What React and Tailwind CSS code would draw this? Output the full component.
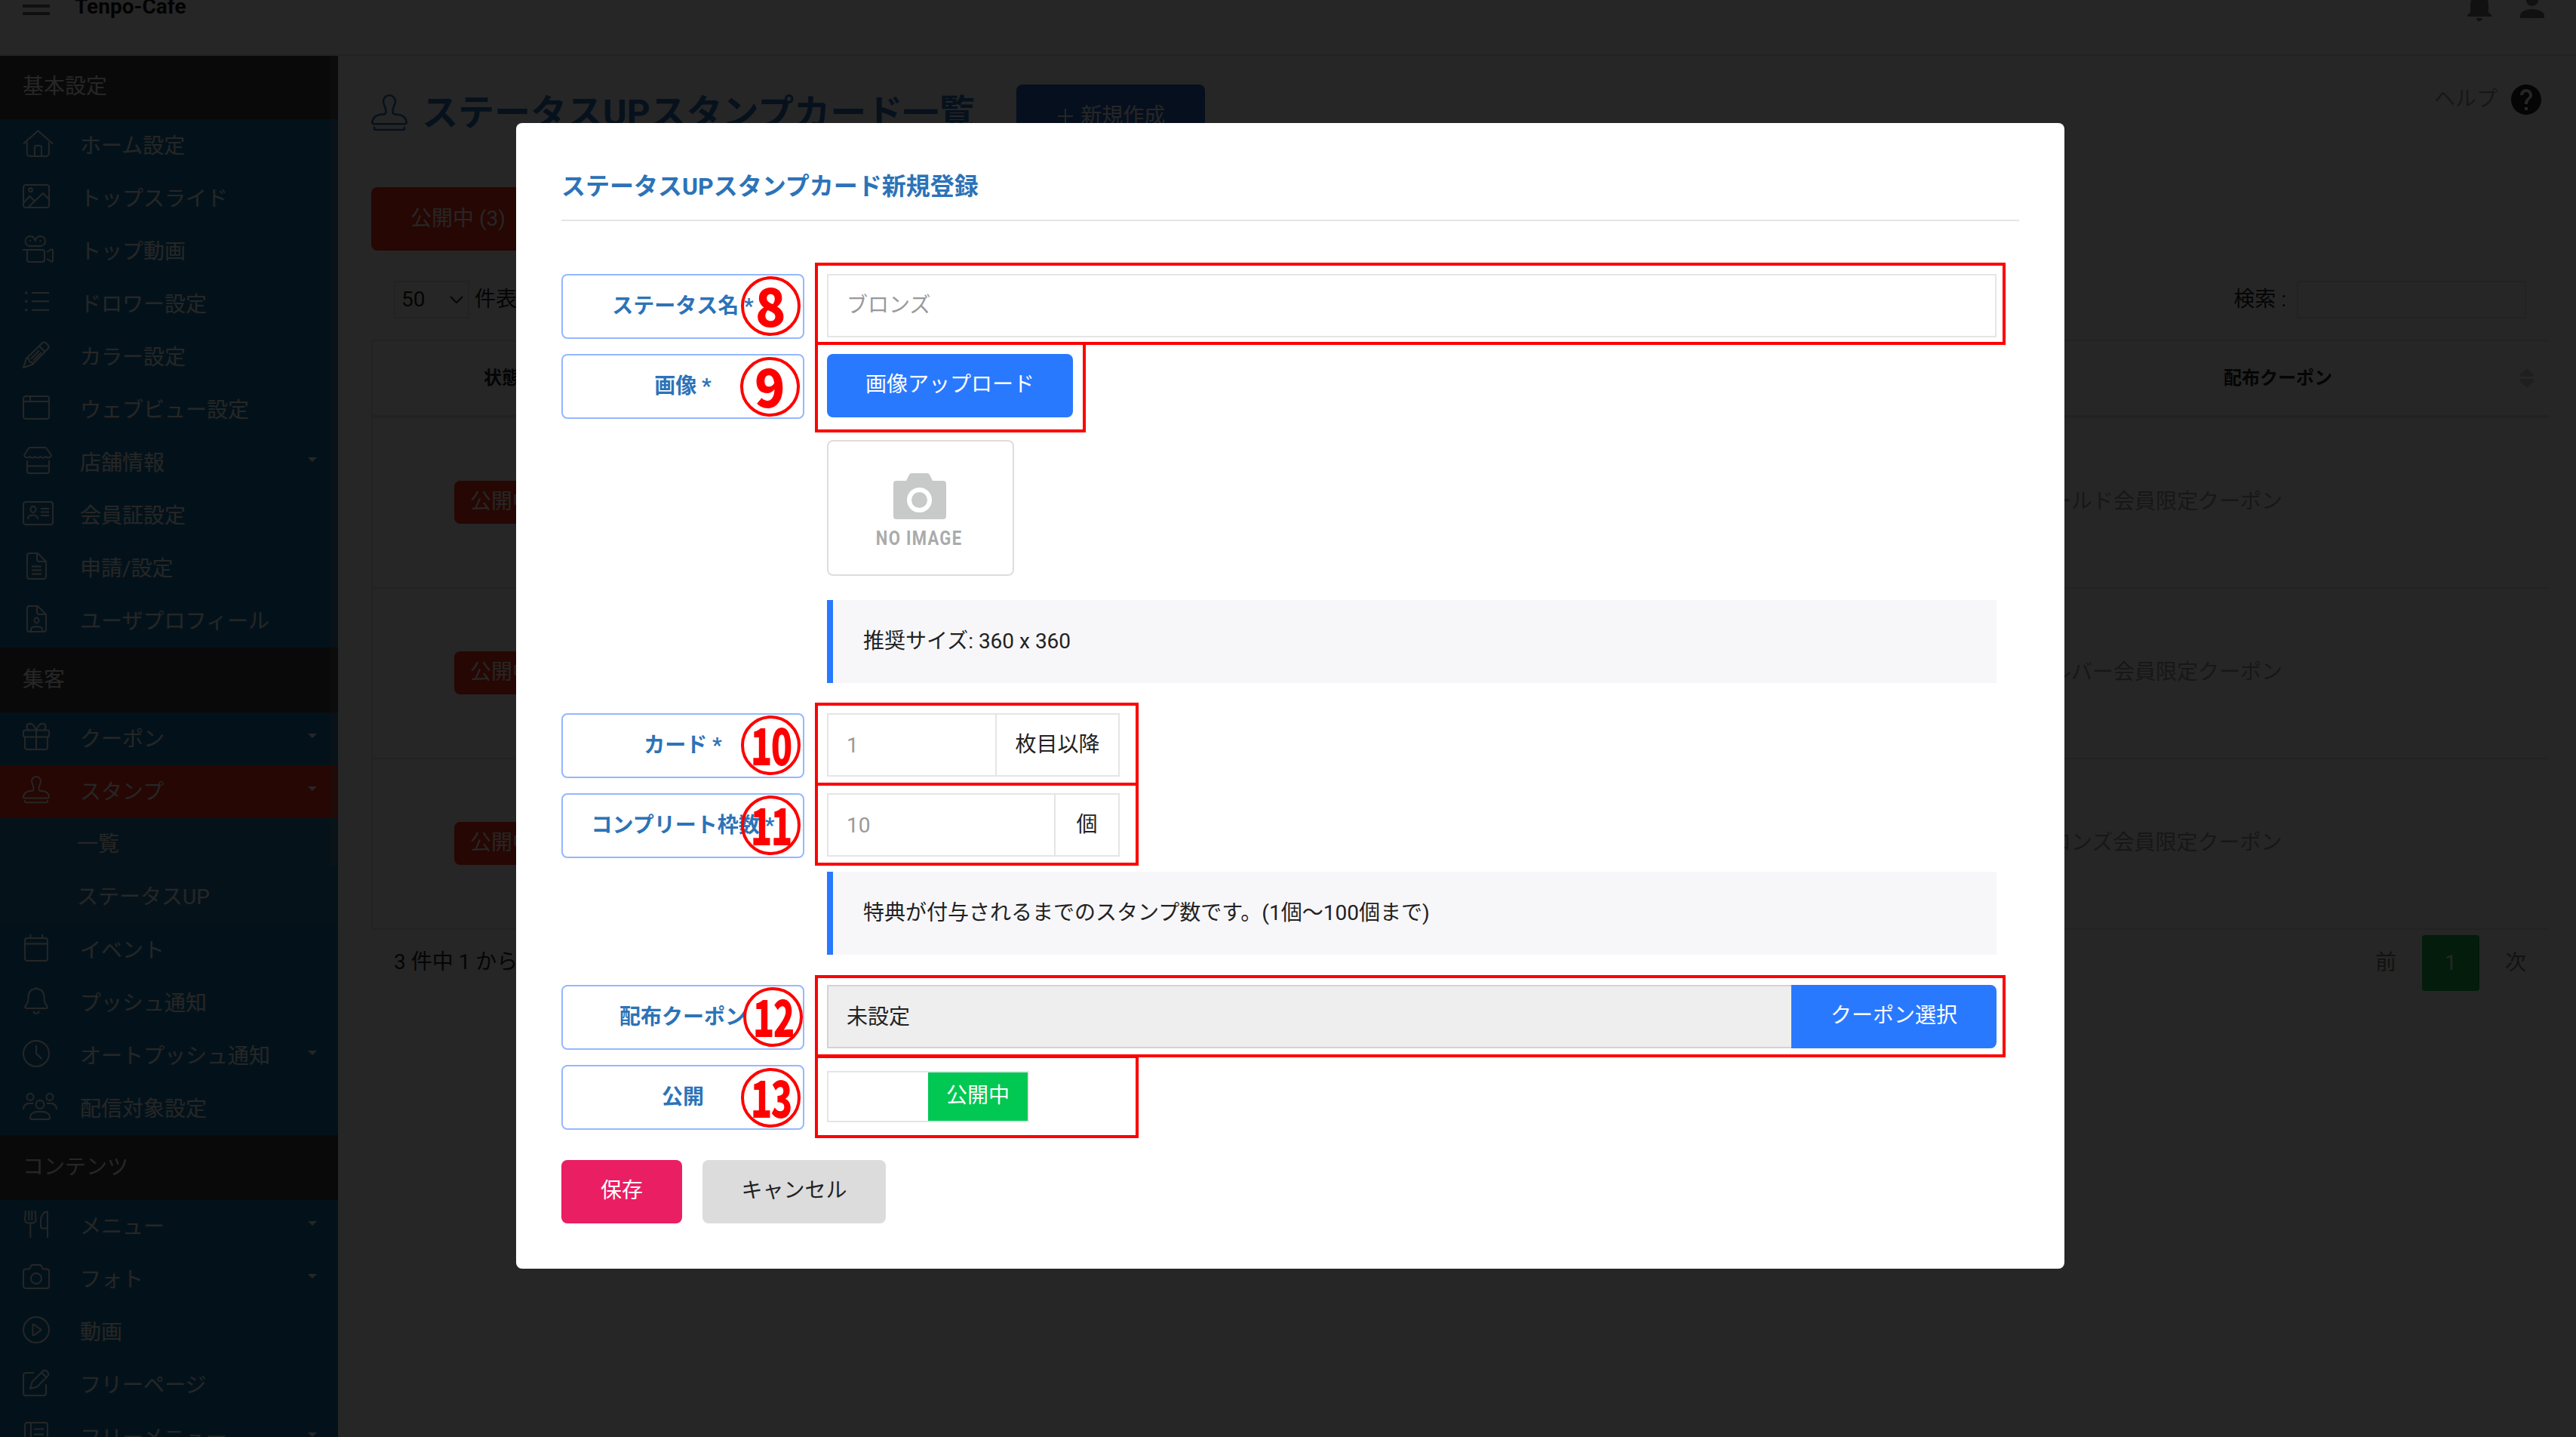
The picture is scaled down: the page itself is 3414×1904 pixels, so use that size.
import React from "react";
import clsx from "clsx";
import { MdHelp, MdNotifications, MdPerson } from "react-icons/md";

const icons = {
  home: (
    <>
      <path d="M1 18.5 20.3 1.2 40 18.5" />
      <path d="M5.8 16v15a4 4 0 0 0 4 4h21a4 4 0 0 0 4-4V16" />
      <path d="M16 35V23a2 2 0 0 1 2-2h5a2 2 0 0 1 2 2v12" />
    </>
  ),
  image: (
    <>
      <rect x="1" y="3" width="34" height="30" rx="3" />
      <circle cx="10.5" cy="9.7" r="2.4" />
      <path d="m1.5 26.5 8-8.5 6 6M8 32l19-18 8 8" />
    </>
  ),
  movie: (
    <>
      <path d="M10 14h13.5a6.5 6.5 0 1 0-6.2-8.5L16.8 7l-.6-1.5A6.5 6.5 0 1 0 10 14z" />
      <path d="M10 6v2M23.5 6v2" />
      <path d="M0 19h26a3 3 0 0 1 3 3v10a3 3 0 0 1-3 3H9a3 3 0 0 1-3-3V19" />
      <path d="m32 22 6-3.5c1-.5 2 0 2 1v14c0 1-1 1.5-2 1L32 31" />
    </>
  ),
  list: (
    <>
      <path d="M12 6h23M12 17.3h23M12 28.7h23" />
      <path strokeWidth="3.5" strokeLinecap="round" d="M4.8 6v.1M4.8 17.3v.1M4.8 28.7v.1" />
    </>
  ),
  pencil: (
    <>
      <path d="m1 35 4-12L26 2.5c1.5-1.5 3.5-1.5 5 0l2.5 2.5c1.5 1.5 1.5 3.5 0 5L13 31z" />
      <path d="m22 6.5 7.5 7.500M5 23l3.500.5.5 4 3.500.5.5 3M11 23.500l11-11M14 26l11-11" />
    </>
  ),
  window: (
    <>
      <rect x="1" y="3" width="34" height="30" rx="3" />
      <path d="M1 10h34M10 3v7" />
    </>
  ),
  store: (
    <>
      <path d="M9.5 1h20a3 3 0 0 1 2.5 1.5l5.5 8c1.5 3-4 5.5-7 2.500-2 2-5 2-7 0-2 2-5 2-7 0-2 2-5 2-7 0-3 2.500-8.500.5-7-2.500l5-8A3 3 0 0 1 9.500 1z" />
      <path d="M6 18v14a3 3 0 0 0 3 3h23a3 3 0 0 0 3-3V18M6 25.5h29" />
    </>
  ),
  idcard: (
    <>
      <rect x="1" y="3" width="39" height="30" rx="3" />
      <ellipse cx="14" cy="13" rx="3.5" ry="4" />
      <path d="M7 26v-1c0-6 13-6 13 0v1M24 12h11M24 16.5h11M24 21h11" />
    </>
  ),
  file: (
    <>
      <path d="M20 1H9a3 3 0 0 0-3 3v28a3 3 0 0 0 3 3h19a3 3 0 0 0 3-3V12z" />
      <path d="M19 1v8a3 3 0 0 0 3 3h9M12 18.5h13M12 23.5h13M12 28.5h13" />
    </>
  ),
  fileUser: (
    <>
      <path d="M20 1H9a3 3 0 0 0-3 3v28a3 3 0 0 0 3 3h19a3 3 0 0 0 3-3V12z" />
      <path d="M19 1v8a3 3 0 0 0 3 3h9" />
      <ellipse cx="18.5" cy="20" rx="3" ry="3.5" />
      <path d="M11 35v-3c0-5 15-5 15 0v3" />
    </>
  ),
  gift: (
    <>
      <rect x="1" y="9.5" width="34" height="9" rx="2" />
      <path d="M3 18.5V32a3 3 0 0 0 3 3h24a3 3 0 0 0 3-3V18.5M18 9.5V35" />
      <path d="M18 9.5C15 2 11 0 8 1 4.5 2 5 8 8 9.5M18 9.5C21 2 25 0 28 1c3.5 1 3 7 0 8.5" />
    </>
  ),
  stamp: (
    <>
      <path d="M14.5 18c.8-5-2.500-7-2.500-11a6 6 0 0 1 12 0c0 4-3.300 6-2.500 11 0 2 2 2 4 2 6 0 9.500 4 9.500 8 0 1-.5 1.500-1.500 1.500h-31C1.500 29.500 1 29 1 28c0-4 3.500-8 9.500-8 2 0 4 0 4-2z" />
      <path d="M3 32v2c0 .7.5 1.2 1.2 1.2h27.600c.7 0 1.200-.5 1.200-1.200v-2" />
    </>
  ),
  calendar: (
    <>
      <rect x="3" y="5" width="30" height="30" rx="3" />
      <path d="M3 12.5h30M10.5 0v5M26 0v5" />
    </>
  ),
  bell: (
    <>
      <path d="M18 0v2M18 2c-7 0-10.5 5-10.500 11 0 6-1 9-3.500 11.500-1.500 1.500-1 3.500 1 3.500h26c2 0 2.500-2 1-3.500-2.500-2.500-3.500-5.500-3.500-11.500C28.500 7 25 2 18 2z" />
      <path d="M14.5 31.5c0 4.5 7 4.5 7 0" />
    </>
  ),
  clock: (
    <>
      <circle cx="18" cy="18" r="17" />
      <path d="M18 7v11l7.5 7" />
    </>
  ),
  users: (
    <>
      <circle cx="10" cy="5.5" r="4.5" />
      <circle cx="36" cy="5.5" r="4.5" />
      <circle cx="23" cy="15.5" r="5.5" />
      <path d="M1 22c0-5.5 3-8 8-8h5M45 22c0-5.5-3-8-8-8h-5" />
      <path d="M10 33c0-5 4-8 10-8h6c6 0 10 3 10 8 0 1.5-.5 2-2 2H12c-1.5 0-2-.5-2-2z" />
    </>
  ),
  fork: (
    <>
      <path d="M4 0 3 12c0 3 2 4.5 4.5 4.5H13c2.5 0 4.500-1.500 4.500-4.500l-1-12M8.300 0v13M12.300 0v13M10.300 16.500V36" />
      <path d="M33 36V1.5c-6 0-9 6-9 12V21c0 1.5.5 2.5 2 2.5h7" />
    </>
  ),
  camera: (
    <>
      <path d="M4 7.5h4c3 0 2-5.5 5-5.5h10c3 0 2 5.5 5 5.5h4a3 3 0 0 1 3 3V30a3 3 0 0 1-3 3H4a3 3 0 0 1-3-3V10.5a3 3 0 0 1 3-3z" />
      <circle cx="18" cy="20" r="7" />
    </>
  ),
  play: (
    <>
      <circle cx="18" cy="18" r="17" />
      <path d="M13.5 11.500v13c0 .8.8 1 1.300.6l9-6.300c.7-.5.7-1.100 0-1.600l-9-6.300c-.5-.4-1.300-.2-1.300.6z" />
    </>
  ),
  edit: (
    <>
      <path d="M15 5H4a3 3 0 0 0-3 3v24a3 3 0 0 0 3 3h24a3 3 0 0 0 3-3V20" />
      <path d="m10 26 2.500-9L27 2.500c1-1 3-1 4.500 0l2 2c1 1.500 1 3 0 4.500L19 23.500zM25 4.500l6.500 6.500" />
    </>
  ),
  book: (
    <>
      <rect x="3" y="1" width="30" height="36" rx="3" />
      <path d="M11 1v36M15 9.5h13M15 16.5h13" />
    </>
  ),
};

const LineIcon = ({ name, className = "w-12 h-9" }) => (
  <svg
    viewBox="0 0 48 36"
    className={clsx("shrink-0 overflow-visible", className)}
    fill="none"
    stroke="currentColor"
    strokeWidth="1.9"
    strokeLinejoin="round"
  >
    {icons[name]}
  </svg>
);

const menu = [
  {
    title: "基本設定",
    items: [
      { label: "ホーム設定", icon: "home" },
      { label: "トップスライド", icon: "image" },
      { label: "トップ動画", icon: "movie" },
      { label: "ドロワー設定", icon: "list" },
      { label: "カラー設定", icon: "pencil" },
      { label: "ウェブビュー設定", icon: "window" },
      { label: "店舗情報", icon: "store", caret: true },
      { label: "会員証設定", icon: "idcard" },
      { label: "申請/設定", icon: "file" },
      { label: "ユーザプロフィール", icon: "fileUser" },
    ],
  },
  {
    title: "集客",
    items: [
      { label: "クーポン", icon: "gift", caret: true },
      { label: "スタンプ", icon: "stamp", caret: true, active: true, children: ["一覧", "ステータスUP"] },
      { label: "イベント", icon: "calendar" },
      { label: "プッシュ通知", icon: "bell" },
      { label: "オートプッシュ通知", icon: "clock", caret: true },
      { label: "配信対象設定", icon: "users" },
    ],
  },
  {
    title: "コンテンツ",
    items: [
      { label: "メニュー", icon: "fork", caret: true },
      { label: "フォト", icon: "camera", caret: true },
      { label: "動画", icon: "play" },
      { label: "フリーページ", icon: "edit" },
      { label: "フリーメニュー", icon: "book", caret: true },
    ],
  },
];

const rows = ["ゴールド会員限定クーポン", "シルバー会員限定クーポン", "ブロンズ会員限定クーポン"];

const Header = () => (
  <header className="flex h-[74px] shrink-0 justify-between overflow-hidden border-b-2 border-[#e5e5e5] pl-[30px] pr-[34px]">
    <div className="flex items-start">
      <div className="-mt-1 flex w-9 flex-col gap-1.5">
        <span className="h-1 bg-[#666]" />
        <span className="h-1 bg-[#666]" />
        <span className="h-1 bg-[#666]" />
      </div>
      <span className="-mt-[7px] ml-[33px] text-[28px] leading-[32px] font-bold text-[#1a1a1a]">Tenpo-Cafe</span>
    </div>
    <div className="-mt-4 flex gap-[22px] text-[#757575]">
      <MdNotifications size={48} />
      <MdPerson size={48} />
    </div>
  </header>
);

const SideItem = ({ item }) => (
  <>
    <div className={clsx("flex h-[70px] items-center pl-[30px] pr-7", item.active && "bg-[#ff2e14]")}>
      <LineIcon name={item.icon} className="w-12 h-9 mb-1.5" />
      <span className="ml-7 grow pt-0.5">{item.label}</span>
      {item.caret && <span className="mb-2 h-0 w-0 border-x-[6px] border-t-[6px] border-x-transparent border-t-white" />}
    </div>
    {item.children?.map((child) => (
      <div key={child} className="flex h-[70px] items-center bg-[#257ba8] pl-[102px]">
        {child}
      </div>
    ))}
  </>
);

const Sidebar = () => (
  <aside className="relative w-[448px] shrink-0 overflow-hidden bg-[#1677ab] text-[28px] leading-[42px] text-white">
    {menu.map((section, i) => (
      <div key={section.title}>
        <div className={clsx("flex items-center bg-[#3c3c3c] pl-[30px]", i === 0 ? "h-[84px] pb-0.5" : "h-[86px]")}>
          {section.title}
        </div>
        {section.items.map((item) => (
          <SideItem key={item.label} item={item} />
        ))}
      </div>
    ))}
    <div className="absolute top-0 right-0 h-[1073px] w-[10px] bg-[#888]/30" />
  </aside>
);

const Main = () => (
  <main className="flex grow flex-col pt-[38px] pr-9 pl-11 text-[28px] leading-[42px]">
    <div className="flex h-[84px] items-start">
      <LineIcon name="stamp" className="mt-[13px] h-12 w-16 text-[#2c73b8]" />
      <h1 className="ml-[3px] text-[48px] leading-[76px] font-bold text-[#2c73b8]">ステータスUPスタンプカード一覧</h1>
      <button className="ml-[55px] flex h-[84px] w-[250px] items-center justify-center rounded-lg bg-[#2a66c0] pl-0.5 text-white">
        <svg viewBox="0 0 20 20" className="mr-2.5 h-5 w-5" stroke="currentColor" strokeWidth="2">
          <path d="M10 0v20M0 10h20" />
        </svg>
        新規作成
      </button>
      <div className="ml-auto flex h-10 items-center pr-1.5 text-[#999]">
        ヘルプ
        <MdHelp size={48} className="ml-3.5 text-[#222]" />
      </div>
    </div>

    <button className="mt-[52px] h-[84px] w-[240px] rounded-lg bg-[#ff2e14] pl-[52px] text-left text-white">
      公開中 (3)
    </button>

    <div className="mt-10 flex h-[50px] items-center pr-[30px] pl-[30px] text-[#222]">
      <div className="flex h-[50px] w-[100px] items-center justify-between border-2 border-[#e5e5e5] pr-1.5 pl-2">
        50
        <svg viewBox="0 0 18 10" className="h-2.5 w-[18px]" fill="none" stroke="currentColor" strokeWidth="2">
          <path d="m1 1 8 8 8-8" />
        </svg>
      </div>
      <span className="ml-[7px]">件表示</span>
      <span className="ml-auto">検索 :</span>
      <div className="ml-[14px] h-[50px] w-[304px] border-2 border-[#e5e5e5]" />
    </div>

    <div className="mt-7 border-t-2 border-l-2 border-[#e5e5e5] text-[24px]">
      <div className="flex h-[102px] items-center justify-between border-b-4 border-[#e5e5e5] font-bold text-[#222]">
        <span className="w-[342px] text-center">状態</span>
        <div className="relative w-[718px] text-center">
          配布クーポン
          <svg viewBox="0 0 18 26" className="absolute top-2 right-5 h-[26px] w-[18px]" fill="#ccc">
            <path d="m9 0 9 8v3H0V8zM0 14h18v4l-9 8-9-8z" />
          </svg>
        </div>
      </div>
      {rows.map((name) => (
        <div key={name} className="flex h-[226px] items-center justify-between border-b-2 border-[#e5e5e5] text-[28px]">
          <div className="flex w-[342px] justify-center">
            <span className="mb-0.5 h-[57px] w-[126px] rounded-lg bg-[#ff2e14] text-center leading-[56px] text-white">公開中</span>
          </div>
          <span className="w-[718px] pb-0.5 pl-[29px] text-[#999]">{name}</span>
        </div>
      ))}
    </div>

    <div className="mt-[7px] flex h-[74px] items-center pr-[30px] pl-[30px] text-[#222]">
      <span className="pb-0.5">3 件中 1 から 3 まで表示</span>
      <span className="ml-auto text-[#777]">前</span>
      <span className="ml-[34px] flex h-[74px] w-[76px] items-center justify-center rounded bg-[#15b850] text-white">1</span>
      <span className="ml-[34px] text-[#777]">次</span>
    </div>
  </main>
);

const Label = ({ children }) => (
  <div className="h-[86px] w-[322px] shrink-0 rounded-lg border-2 border-[#94b8ff] text-center leading-[81px] font-bold text-[#2c73b8]">
    {children}
  </div>
);

const Note = ({ children }) => (
  <div className="h-[110px] border-l-8 border-[#2979ff] bg-[#f7f7f9] pl-10 leading-[110px]">{children}</div>
);

const UnitInput = ({ value, unit, unitClass }) => (
  <div className="flex h-[84px] w-[388px] border-2 border-[#e5e5e5] leading-[79px]">
    <span className="grow pl-6 pt-px text-[#999]">{value}</span>
    <span className={clsx("border-l-2 border-[#e5e5e5] text-center", unitClass)}>{unit}</span>
  </div>
);

// red frames and numbers, positioned from the modal's top left corner
const frames = [
  "left-[396px] top-[185px] w-[1578px] h-[109px]",
  "left-[396px] top-[290px] w-[359px] h-[120px]",
  "left-[396px] top-[768px] w-[429px] h-[110px]",
  "left-[396px] top-[874px] w-[429px] h-[110px]",
  "left-[396px] top-[1129px] w-[1578px] h-[109px]",
  "left-[396px] top-[1235px] w-[429px] h-[110px]",
];

const marks = [
  { n: 8, pos: "left-[298px] top-[203px]" },
  { n: 9, pos: "left-[297px] top-[310px]" },
  { n: 10, pos: "left-[298px] top-[785px]" },
  { n: 11, pos: "left-[298px] top-[891px]" },
  { n: 12, pos: "left-[301px] top-[1145px]" },
  { n: 13, pos: "left-[298px] top-[1252px]" },
];

const Modal = () => (
  <div className="relative h-[1518px] w-[2052px] rounded-lg bg-white px-[60px] pt-[60px] text-[28px] text-[#222]">
    <h2 className="border-b-2 border-[#e5e5e5] pb-5 text-[32px] leading-[48px] font-bold text-[#2c73b8]">
      ステータスUPスタンプカード新規登録
    </h2>

    <div className="mt-[70px] flex gap-[30px]">
      <Label>ステータス名 *</Label>
      <div className="h-[84px] w-[1550px] border-2 border-[#e5e5e5] pl-6 leading-[80px] text-[#999]">ブロンズ</div>
    </div>

    <div className="mt-5 flex gap-[30px]">
      <Label>画像 *</Label>
      <div className="w-[1550px]">
        <button className="block h-[84px] w-[326px] rounded-lg bg-[#2979ff] pb-0.5 text-white">画像アップロード</button>
        <div className="mt-[30px] flex h-[180px] w-[248px] flex-col items-center rounded-lg border-2 border-[#ddd] pt-[42px] pr-0.5">
          <svg viewBox="0 0 70 61" className="h-[61px] w-[70px]">
            <path
              fill="#c8caca"
              d="M4 10h13l4-8q1-2 3-2h21q2 0 3 2l4 8h14q4 0 4 4v43q0 4-4 4H4q-4 0-4-4V14q0-4 4-4z"
            />
            <circle cx="34.5" cy="35.5" r="13.5" fill="none" stroke="#fff" strokeWidth="6" />
          </svg>
          <span className="mt-3 pr-0.5 text-[25px] leading-[28px] font-bold text-[#a9abab]">
            <span className="inline-block scale-x-[0.88] tracking-[1.5px]">NO IMAGE</span>
          </span>
        </div>
        <div className="mt-8">
          <Note>推奨サイズ: 360 x 360</Note>
        </div>
      </div>
    </div>

    <div className="mt-10 flex gap-[30px]">
      <Label>カード *</Label>
      <UnitInput value="1" unit="枚目以降" unitClass="w-[163px]" />
    </div>

    <div className="mt-5 flex gap-[30px]">
      <Label>コンプリート枠数 *</Label>
      <div className="w-[1550px]">
        <UnitInput value="10" unit="個" unitClass="w-[85px]" />
        <div className="mt-5">
          <Note>特典が付与されるまでのスタンプ数です。(1個〜100個まで)</Note>
        </div>
      </div>
    </div>

    <div className="mt-10 flex gap-[30px]">
      <Label>配布クーポン</Label>
      <div className="flex h-[84px] w-[1550px]">
        <div className="grow border-2 border-r-0 border-[#d3d3d3] bg-[#eee] pl-6 leading-[82px]">未設定</div>
        <button className="w-[272px] rounded-r-lg bg-[#2979ff] pb-0.5 text-white">クーポン選択</button>
      </div>
    </div>

    <div className="mt-5 flex gap-[30px]">
      <Label>公開</Label>
      <div className="mt-2 flex h-[68px] w-[268px] justify-end border-2 border-[#e5e5e5]">
        <span className="w-[132px] bg-[#00c853] text-center leading-[61px] text-white">公開中</span>
      </div>
    </div>

    <div className="mt-10 flex gap-[27px]">
      <button className="h-[84px] w-[160px] rounded-lg bg-[#e91e63] pb-0.5 text-white">保存</button>
      <button className="h-[84px] w-[243px] rounded-lg bg-[#dcdcdc] pb-0.5">キャンセル</button>
    </div>

    {frames.map((cls) => (
      <div key={cls} className={clsx("absolute border-4 border-[#f00]", cls)} />
    ))}
    {marks.map(({ n, pos }) => (
      <div
        key={n}
        className={clsx("absolute flex h-[79px] w-[79px] items-center justify-center rounded-full border-4 border-[#f00] text-[#f00]", pos)}
      >
        <span
          className={clsx(
            "mb-1.5 font-['Noto_Sans_CJK_JP',sans-serif] leading-[79px] font-black",
            n < 10 ? "text-[70px] scale-x-95" : "scale-x-[0.7] text-[67px] tracking-[-2px]"
          )}
        >
          {n}
        </span>
      </div>
    ))}
  </div>
);

const App = () => {
  return (
    <div className="relative flex h-[1904px] w-[3414px] flex-col overflow-hidden bg-white font-[Roboto,'Noto_Sans_CJK_JP',sans-serif]">
      <Header />
      <div className="flex h-[1830px]">
        <Sidebar />
        <Main />
      </div>
      <div className="absolute inset-0 bg-black/85 pt-[163px] pl-[684px]">
        <Modal />
      </div>
    </div>
  );
};

export default App;
